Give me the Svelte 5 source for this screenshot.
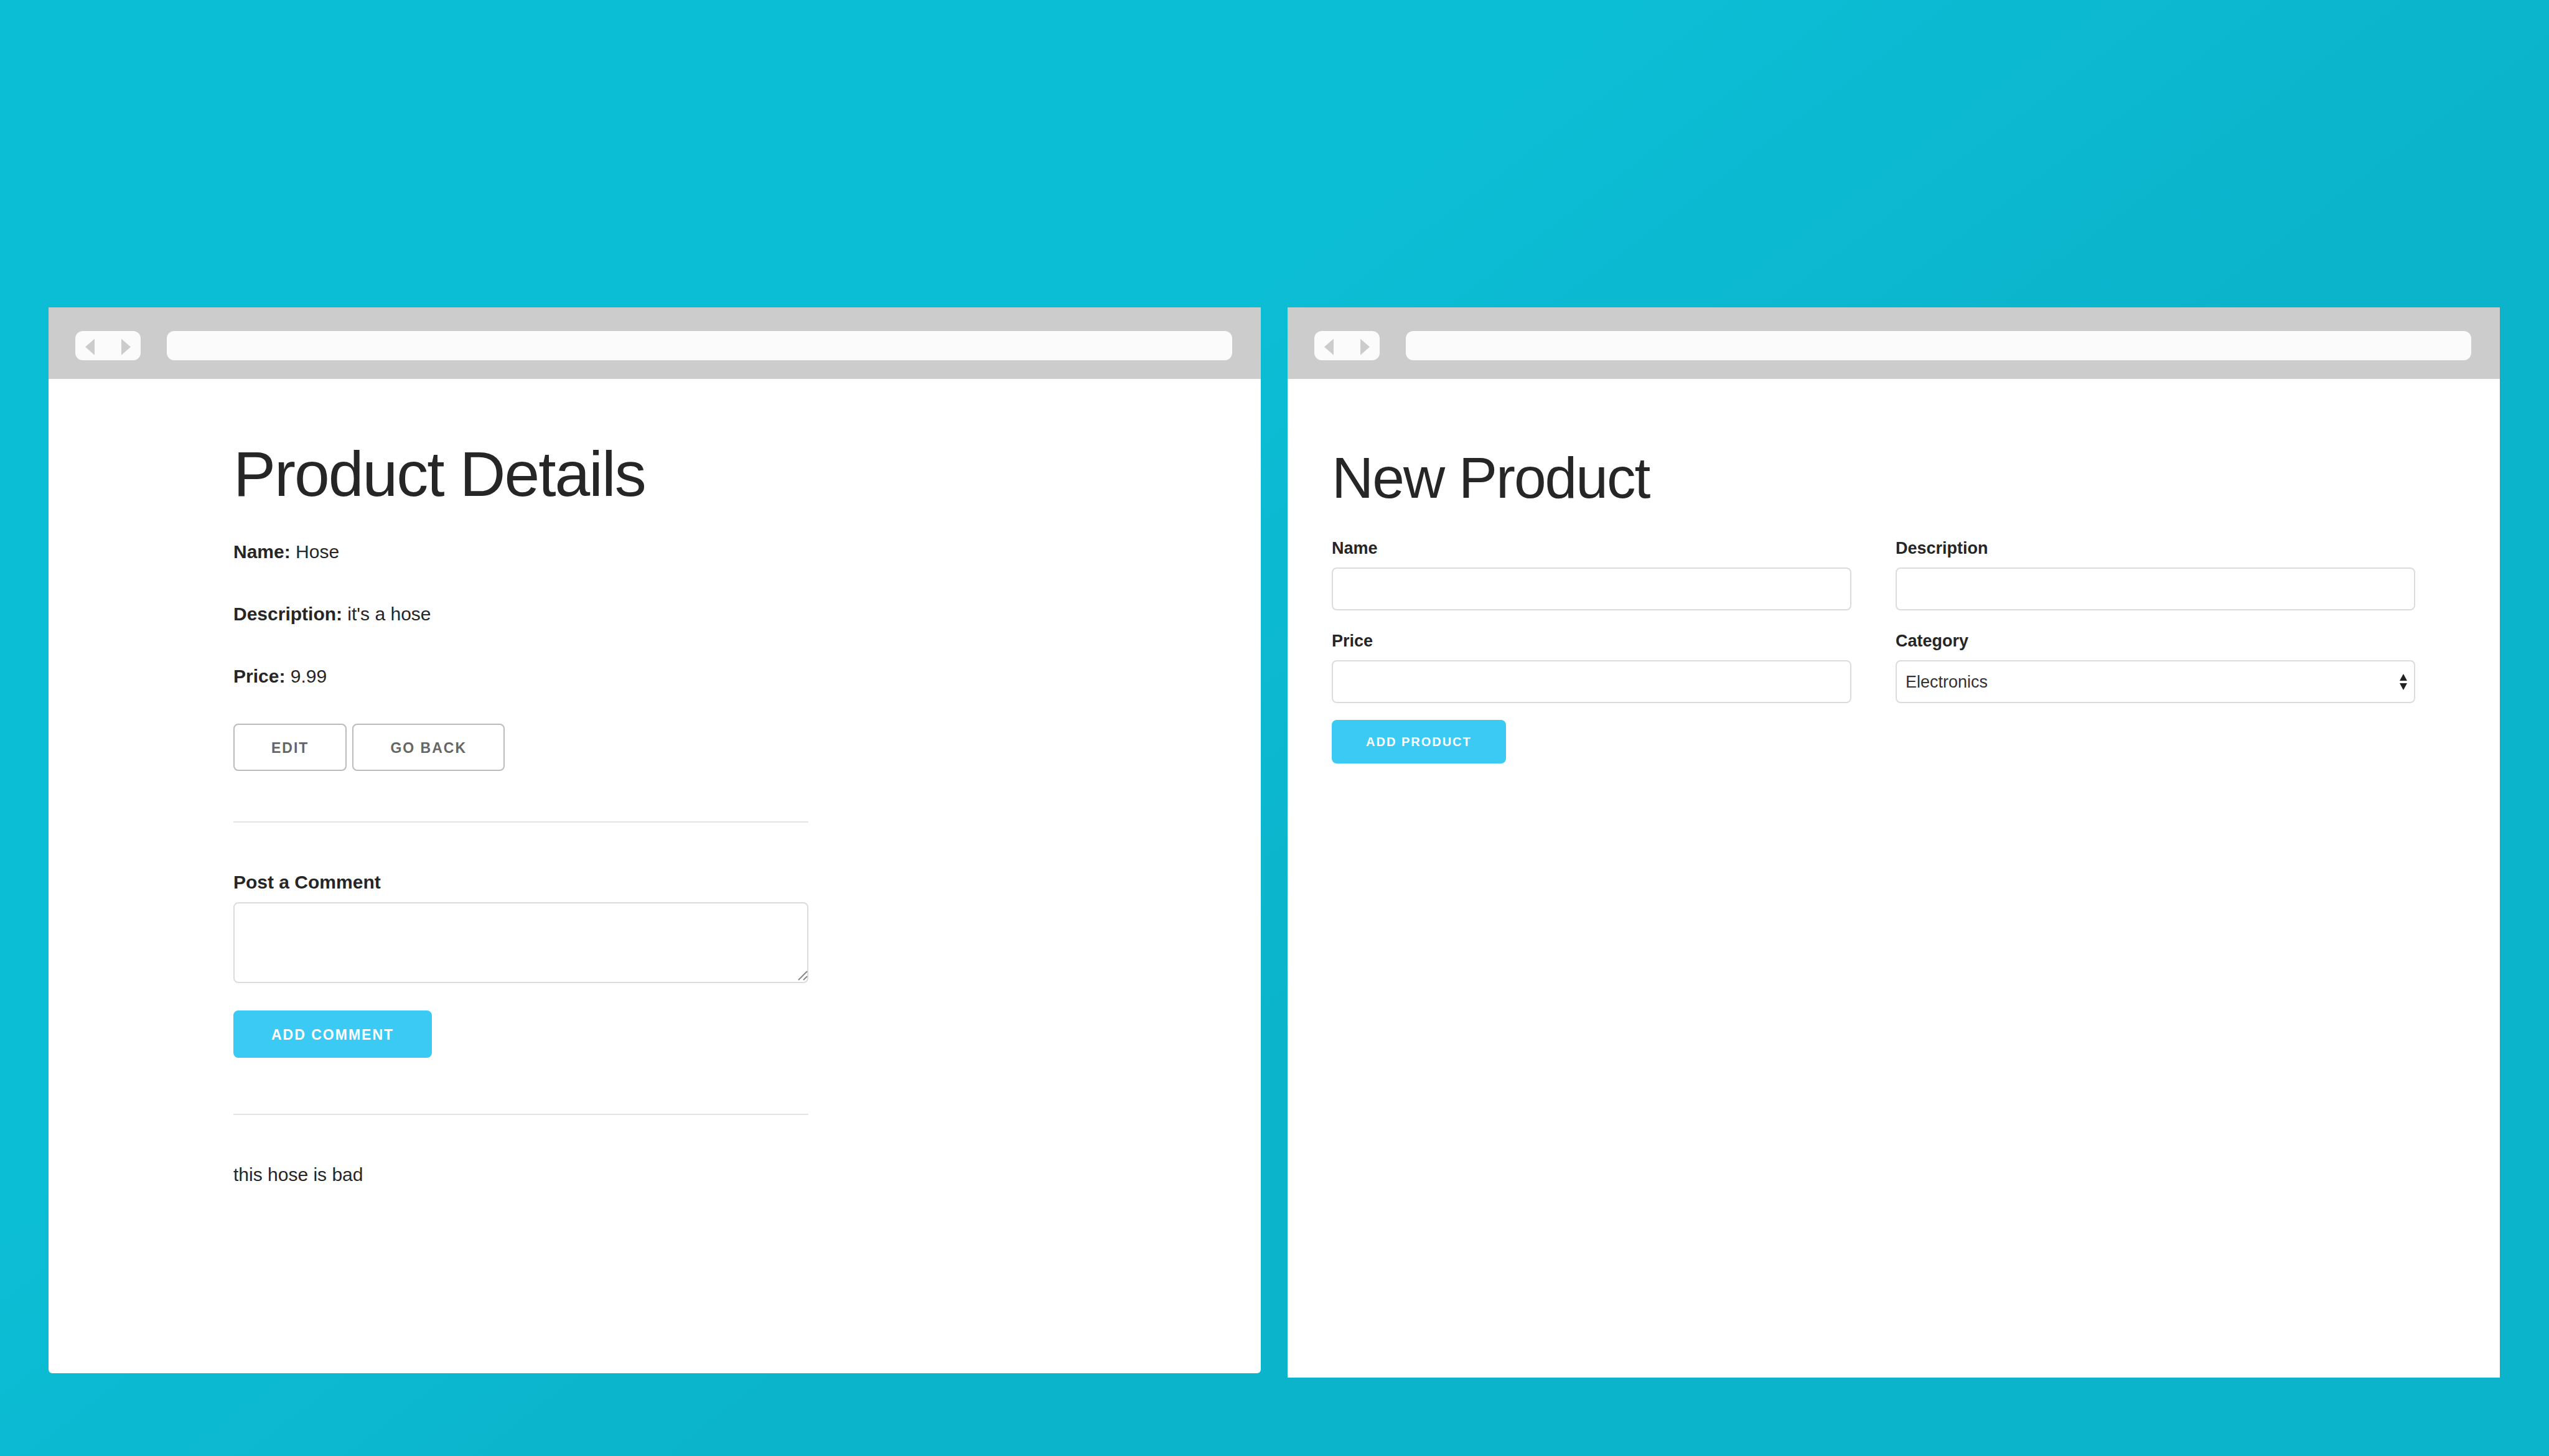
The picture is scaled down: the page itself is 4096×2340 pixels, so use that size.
<script>
  let comment = $state('');
  let product = $state({ name: '', description: '', price: '', category: 'Electronics' });
  const details = [
    { label: 'Name:', value: 'Hose' },
    { label: 'Description:', value: "it's a hose" },
    { label: 'Price:', value: '9.99' }
  ];
</script>

{#snippet chrome(title)}
  <header class="chrome">
    <div class="nav">
      <button type="button" aria-label="Back">
        <svg viewBox="0 0 16 28" aria-hidden="true"><path d="M16 0v28L0 14z" /></svg>
      </button>
      <button type="button" aria-label="Forward">
        <svg viewBox="0 0 16 28" aria-hidden="true"><path d="M0 0v28L16 14z" /></svg>
      </button>
    </div>
    <input class="address" type="text" aria-label={title + ' address'} />
  </header>
{/snippet}

<main class="stage">
  <section class="window rounded">
    {@render chrome('Product Details')}
    <div class="details">
      <h1>Product Details</h1>
      {#each details as item}
        <p><strong>{item.label}</strong> {item.value}</p>
      {/each}
      <div class="actions">
        <button type="button" class="btn">Edit</button>
        <button type="button" class="btn">Go Back</button>
      </div>
      <hr />
      <form onsubmit={(e) => e.preventDefault()}>
        <label for="comment">Post a Comment</label>
        <div class="area">
          <textarea id="comment" bind:value={comment}></textarea>
          <svg class="grip" viewBox="0 0 16 16" aria-hidden="true">
            <path d="M1 15L15 1M9 15L15 9" />
          </svg>
        </div>
        <button type="submit" class="btn primary">Add Comment</button>
      </form>
      <hr class="end" />
      <p>this hose is bad</p>
    </div>
  </section>

  <section class="window tall">
    {@render chrome('New Product')}
    <form class="create" onsubmit={(e) => e.preventDefault()}>
      <h2>New Product</h2>
      <div class="grid">
        <div class="field">
          <label for="name">Name</label>
          <input id="name" type="text" bind:value={product.name} />
        </div>
        <div class="field">
          <label for="description">Description</label>
          <input id="description" type="text" bind:value={product.description} />
        </div>
        <div class="field">
          <label for="price">Price</label>
          <input id="price" type="text" bind:value={product.price} />
        </div>
        <div class="field">
          <label for="category">Category</label>
          <div class="select">
            <select id="category" bind:value={product.category}>
              <option>Electronics</option>
            </select>
            <svg viewBox="0 0 12 26" aria-hidden="true"><path d="M6 0l6 11H0zM6 26l6-11H0z" /></svg>
          </div>
        </div>
      </div>
      <button type="submit" class="btn primary small">Add Product</button>
    </form>
  </section>
</main>

<style>
  :global(body) {
    margin: 0;
  }

  .stage,
  .stage * {
    box-sizing: border-box;
  }

  .stage {
    display: grid;
    grid-template-columns: 1fr 1fr;
    align-items: start;
    gap: 43px;
    min-height: 100vh;
    padding: 494px 79px 126px 78px;
    background: linear-gradient(143deg, #0bbed6 34%, #0bb4cb 60%);
    color: #262626;
    font-family: 'Liberation Sans', Arial, sans-serif;
    font-size: 30px;
    line-height: 48px;
  }

  .window {
    min-height: 1713px;
    background: #fff;
  }

  .rounded {
    border-radius: 0 0 6px 6px;
  }

  .tall {
    min-height: 1720px;
  }

  .chrome {
    display: flex;
    align-items: center;
    gap: 42px;
    height: 115px;
    padding: 8px 46px 0 43px;
    background: #ccc;
  }

  .nav {
    display: flex;
    justify-content: space-between;
    align-items: center;
    flex: none;
    width: 105px;
    height: 47px;
    padding: 4px 16px 0;
    border-radius: 12px;
    background: #fbfbfb;
  }

  .nav button {
    display: flex;
    padding: 0;
    border: 0;
    background: none;
  }

  .nav svg {
    width: 15px;
    height: 27px;
    fill: #ccc;
  }

  .address {
    flex: 1;
    min-width: 0;
    height: 47px;
    padding: 0 16px;
    border: 0;
    border-radius: 12px;
    background: #fbfbfb;
    font: inherit;
  }

  h1,
  h2 {
    margin: 0;
    font-weight: 400;
    letter-spacing: -2px;
  }

  h1 {
    margin-bottom: 40px;
    font-size: 102px;
    line-height: 122px;
  }

  h2 {
    margin-bottom: 34px;
    font-size: 93px;
    line-height: 116px;
  }

  .details {
    width: 1221px;
    max-width: 100%;
    padding: 92px 0 0 297px;
  }

  p {
    margin: 0 0 52px;
  }

  .actions {
    display: flex;
    gap: 9px;
  }

  .btn {
    height: 76px;
    padding: 2px 59px 0;
    border: 2px solid #bbb;
    border-radius: 8px;
    background: #fff;
    color: #666;
    font: bold 23px/70px 'Liberation Sans', Arial, sans-serif;
    letter-spacing: 2px;
    text-transform: uppercase;
    white-space: nowrap;
  }

  .primary {
    border-color: #3bcaf4;
    background: #3bcaf4;
    color: #fff;
  }

  .small {
    height: 70px;
    padding: 0 53px;
    font-size: 20px;
    line-height: 66px;
  }

  hr {
    height: 2px;
    margin: 81px 0 72px;
    border: 0;
    background: #e4e4e4;
  }

  .end {
    margin-top: 90px;
  }

  label {
    display: block;
    font-weight: 700;
  }

  .area {
    position: relative;
    margin: 8px 0 44px;
  }

  textarea,
  .field input,
  select {
    display: block;
    width: 100%;
    padding: 12px 14px;
    border: 2px solid #dcdcdc;
    border-radius: 8px;
    background: #fff;
    color: #333;
    font: inherit;
  }

  textarea {
    height: 130px;
    resize: none;
  }

  .grip {
    position: absolute;
    right: 1px;
    bottom: 4px;
    width: 16px;
    height: 16px;
    fill: none;
    stroke: #888;
    stroke-width: 2;
  }

  .create {
    padding: 101px 136px 0 71px;
    font-size: 27px;
    line-height: 43px;
  }

  .grid {
    display: grid;
    grid-template-columns: 1fr 1fr;
    gap: 28px 71px;
    margin-bottom: 27px;
  }

  .field label {
    margin-bottom: 9px;
  }

  .field input,
  select {
    height: 69px;
  }

  select {
    appearance: none;
  }

  .select {
    position: relative;
  }

  .select svg {
    position: absolute;
    top: 22px;
    right: 13px;
    width: 12px;
    height: 26px;
    fill: #222;
    pointer-events: none;
  }
</style>
